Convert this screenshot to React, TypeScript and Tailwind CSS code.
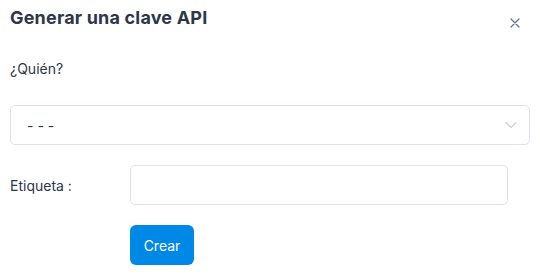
import { useState } from "react";

export default function App() {
  const [label, setLabel] = useState("");

  return (
    <div className="min-h-[276px] w-[540px] bg-white font-['Inter',sans-serif] text-[#2d3748]">
      <div className="flex items-start justify-between pl-[10px] pr-[20px] pt-[4px]">
        <h2 className="text-[18px] font-bold leading-[28px] tracking-[0.01em] text-[#2d3748]">
          Generar una clave API
        </h2>
        <button className="mt-[14px] text-[#6b7280]">
          <svg width="10" height="10" viewBox="0 0 10 10" fill="none">
            <path
              d="M1 1L9 9M9 1L1 9"
              stroke="currentColor"
              strokeWidth="1.3"
              strokeLinecap="round"
            />
          </svg>
        </button>
      </div>

      <div className="px-[10px] pt-[27px]">
        <p className="text-[14px] leading-[20px] text-[#2d3748]">¿Quién?</p>

        <div className="mt-[26px] flex h-[40px] items-center justify-between rounded-[5px] border border-[#dde3ee] pl-[16px] pr-[12px]">
          <span className="text-[14px] text-[#2d3748]">- - -</span>
          <svg width="12" height="8" viewBox="0 0 12 8" fill="none">
            <path
              d="M1 1.5L6 6.5L11 1.5"
              stroke="#cfd6e4"
              strokeWidth="1.5"
              strokeLinecap="round"
              strokeLinejoin="round"
            />
          </svg>
        </div>

        <div className="mt-[20px] flex items-center">
          <label className="w-[120px] text-[14px] text-[#2d3748]">
            Etiqueta :
          </label>
          <input
            value={label}
            onChange={(e) => setLabel(e.target.value)}
            className="h-[40px] w-[378px] rounded-[5px] border border-[#dde3ee] px-3 text-[14px] outline-none"
          />
        </div>

        <div className="mt-[20px] pl-[120px]">
          <button className="h-[40px] w-[64px] rounded-[6px] bg-[#0088e6] text-[14px] text-white">
            Crear
          </button>
        </div>
      </div>
    </div>
  );
}
